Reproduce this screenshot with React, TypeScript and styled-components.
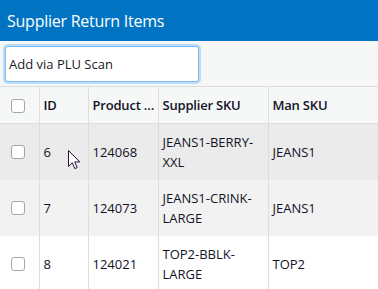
import React from "react";
import styled, { createGlobalStyle } from "styled-components";

const Global = createGlobalStyle`
  html, body { margin: 0; padding: 0; background: #ffffff; }
  body { font-family: "Open Sans", "Noto Sans", sans-serif; overflow: hidden; }
`;

const Page = styled.div`
  width: 378px;
  height: 289px;
  overflow: hidden;
  position: relative;
`;

const TitleBar = styled.div`
  height: 41px;
  background: #0074c2;
  color: #ffffff;
  display: flex;
  align-items: center;
  padding-left: 7px;
  font-size: 16px;
  letter-spacing: -0.25px;
`;

const Toolbar = styled.div`
  height: 46px;
  box-sizing: border-box;
  background: #f6f7f7;
  padding: 5px 0 0 5px;
  border-bottom: 1px solid #dddddd;
`;

const ScanInput = styled.input`
  box-sizing: border-box;
  width: 194px;
  height: 36px;
  border: 1px solid #7fbcf5;
  border-radius: 3px;
  box-shadow: 0 0 0 2px #bcdcf8;
  outline: none;
  padding: 0 3px;
  font-family: "Open Sans", "Noto Sans", sans-serif;
  font-size: 13px;
  color: #1b1b2a;
  background: #ffffff;
  &::placeholder { color: #1b1b2a; }
`;

const Table = styled.table`
  border-collapse: collapse;
  table-layout: fixed;
  width: 420px;
  font-size: 13px;
  color: #131328;
`;

const HeadCell = styled.th<{ $w: number }>`
  width: ${(p) => p.$w}px;
  height: 36px;
  box-sizing: border-box;
  background: #f6f7f7;
  border-right: 1px solid #dddddd;
  border-bottom: 1px solid #dddddd;
  text-align: left;
  font-weight: 600;
  letter-spacing: -0.2px;
  padding: 0 3px 0 4px;
  white-space: nowrap;
  overflow: hidden;
  text-overflow: ellipsis;
`;

const Row = styled.tr<{ $bg: string }>`
  background: ${(p) => p.$bg};
`;

const Cell = styled.td`
  height: 56px;
  box-sizing: border-box;
  border-right: 1px solid #dddddd;
  padding: 8px 5px 8px 4px;
  line-height: 20px;
  vertical-align: middle;
  word-break: break-word;
`;

const BoxCell = styled.td`
  border-right: 1px solid #dddddd;
  padding: 0 0 0 11px;
  vertical-align: middle;
`;

const BoxHead = styled.th`
  width: 39px;
  box-sizing: border-box;
  background: #f6f7f7;
  border-right: 1px solid #dddddd;
  border-bottom: 1px solid #dddddd;
  padding: 2px 0 0 11px;
  text-align: left;
`;

const Check = styled.span`
  display: block;
  width: 14px;
  height: 14px;
  box-sizing: border-box;
  border: 1px solid #a4a4b4;
  border-radius: 3px;
  background: #ffffff;
`;

const Cursor = styled.svg`
  position: absolute;
  left: 68px;
  top: 150px;
  width: 13px;
  height: 20px;
`;

const rows = [
  { id: "6", product: "124068", sku: "JEANS1-BERRY-XXL", man: "JEANS1", bg: "#ebebeb" },
  { id: "7", product: "124073", sku: "JEANS1-CRINK-LARGE", man: "JEANS1", bg: "#f2f2f2" },
  { id: "8", product: "124021", sku: "TOP2-BBLK-LARGE", man: "TOP2", bg: "#ffffff" },
];

export default function App() {
  return (
    <Page>
      <Global />
      <TitleBar>Supplier Return Items</TitleBar>
      <Toolbar>
        <ScanInput placeholder="Add via PLU Scan" />
      </Toolbar>
      <Table>
        <thead>
          <tr>
            <BoxHead>
              <Check />
            </BoxHead>
            <HeadCell $w={49}>ID</HeadCell>
            <HeadCell $w={70}>Product ID</HeadCell>
            <HeadCell $w={110}>Supplier SKU</HeadCell>
            <HeadCell $w={152}>Man SKU</HeadCell>
          </tr>
        </thead>
        <tbody>
          {rows.map((r) => (
            <Row key={r.id} $bg={r.bg}>
              <BoxCell>
                <Check />
              </BoxCell>
              <Cell>{r.id}</Cell>
              <Cell>{r.product}</Cell>
              <Cell>{r.sku}</Cell>
              <Cell>{r.man}</Cell>
            </Row>
          ))}
        </tbody>
      </Table>
      <Cursor viewBox="0 0 13 20">
        <path
          d="M0.5 0.5 L0.5 16.5 L4.3 12.8 L6.8 18.6 L9.2 17.6 L6.7 11.9 L11.8 11.9 Z"
          fill="#ffffff"
          stroke="#2a1140"
          strokeWidth="1"
          strokeLinejoin="miter"
        />
      </Cursor>
    </Page>
  );
}
